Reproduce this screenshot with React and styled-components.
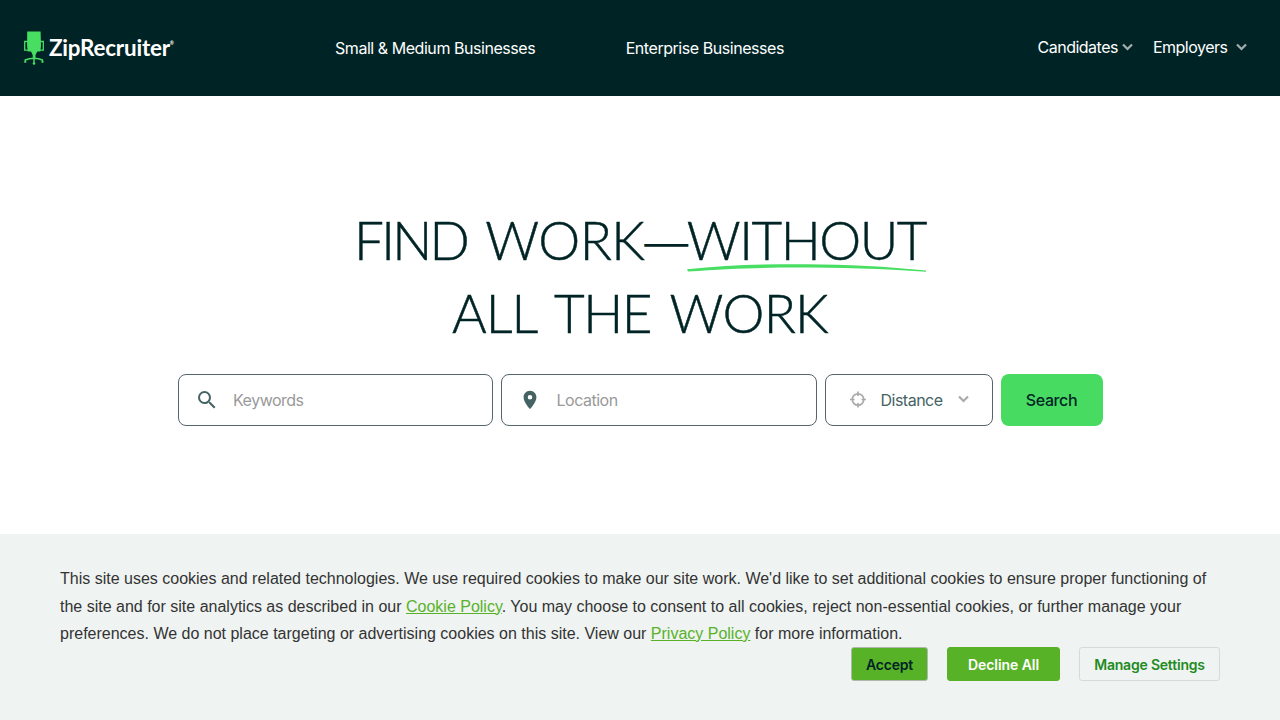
import React from 'react'
import styled, { createGlobalStyle } from 'styled-components'
import { MdSearch, MdLocationOn } from 'react-icons/md'

const GlobalStyle = createGlobalStyle`
* {
  box-sizing: border-box;
}
body {
  margin: 0;
  background: #fff;
  color: #002426;
  font-family: Inter, 'Liberation Sans', sans-serif;
}
`
const Page = styled.div`
  display: flex;
  flex-direction: column;
  height: 100vh;
`
const Header = styled.header`
  display: flex;
  align-items: center;
  height: 96px;
  flex: none;
  padding: 0 33.5px 0 24px;
  background: #002426;
`
const Logo = styled.a`
  display: flex;
  align-items: center;
  width: 311px;
  color: #fff;
  svg {
    margin-right: 5px;
  }
`
const LogoText = styled.span`
  padding-bottom: 1px;
  font-family: Lato, sans-serif;
  font-weight: 700;
  font-size: 22.4px;
  line-height: 30px;
  letter-spacing: -0.2px;
  sup {
    font-size: 5px;
    line-height: 0;
    vertical-align: 11px;
  }
`
const Nav = styled.nav`
  display: flex;
  flex: 1;
  gap: 90.5px;
`
const NavLink = styled.a`
  color: #fff;
  font-size: 16px;
  line-height: 24px;
  letter-spacing: -0.45px;
  white-space: nowrap;
`
const Menus = styled.div`
  display: flex;
  gap: 20px;
  padding-bottom: 2px;
`
const MenuLink = styled(NavLink)`
  display: flex;
  align-items: center;
  gap: ${(p) => p.$gap};
  letter-spacing: -0.5px;
`
const Main = styled.main`
  flex: 1;
  padding-top: 107px;
`
const Title = styled.h1`
  margin: 0;
  text-align: center;
  font-family: Lato, sans-serif;
  font-weight: 300;
  font-size: 53px;
  line-height: 73px;
  letter-spacing: -1.5px;
  word-spacing: 5.5px;
  -webkit-text-stroke: 0.5px #002426;
`
const Word = styled.span`
  letter-spacing: ${(p) => p.$track};
`
const Dash = styled.span`
  font-family: Inter, sans-serif;
  font-size: 44px;
  line-height: 1;
  vertical-align: 1px;
  -webkit-text-stroke: 0;
`
const Marked = styled.span`
  position: relative;
  svg {
    position: absolute;
    left: 0;
    bottom: -1px;
    width: 100%;
    height: 8px;
  }
`
const SearchForm = styled.form`
  display: grid;
  grid-template-columns: 315px 316px 168px 102px;
  gap: 8px;
  justify-content: center;
  margin-top: 25px;
`
const Field = styled.label`
  display: flex;
  align-items: center;
  height: 52px;
  padding: 0 ${(p) => p.$pad};
  border: 1px solid #56646c;
  border-radius: 8px;
  svg {
    flex: none;
    color: #456363;
  }
`
const Input = styled.input`
  flex: 1;
  min-width: 0;
  margin-left: ${(p) => p.$offset};
  padding: 0;
  border: 0;
  outline: none;
  background: none;
  font: 16px Inter, sans-serif;
  letter-spacing: -0.5px;
  &::placeholder {
    color: #999;
    opacity: 1;
  }
`
const Distance = styled.button`
  display: flex;
  align-items: center;
  height: 52px;
  padding: 0 23px 0 24px;
  border: 1px solid #56646c;
  border-radius: 8px;
  background: #fff;
  color: #456363;
  font: 16px Inter, sans-serif;
  letter-spacing: -0.5px;
  svg {
    margin-bottom: 2px;
  }
  span {
    flex: 1;
    margin-left: 14px;
    text-align: left;
  }
`
const SearchButton = styled.button`
  height: 52px;
  border: 0;
  border-radius: 8px;
  background: #47dc61;
  color: #002426;
  font: 500 16px Inter, sans-serif;
  letter-spacing: -0.4px;
`
const CookieBar = styled.section`
  height: 186px;
  flex: none;
  padding: 31px 60px 0;
  background: #eff3f2;
`
const CookieText = styled.p`
  margin: 0;
  color: #333;
  font: 16px/27.5px 'Liberation Sans', sans-serif;
  a {
    color: #58b228;
    text-decoration: underline;
  }
`
const Actions = styled.div`
  display: flex;
  justify-content: flex-end;
  gap: 19px;
  margin-top: -0.5px;
`
const ActionButton = styled.button`
  width: ${(p) => p.$width};
  height: 34px;
  padding: 0;
  border: 1px solid ${(p) => p.$border};
  border-radius: 3px;
  background: ${(p) => p.$bg || 'transparent'};
  color: ${(p) => p.$color};
  font: 600 14px Inter, sans-serif;
  letter-spacing: ${(p) => p.$spacing || '-0.2px'};
`

const Chair = () => (
  <svg width="20" height="34" viewBox="0 0 20 34" fill="none" stroke="#47de62">
    <path d="M3.200 .5h13.400l.4 14.500-.7 5.500h-3l-1.800 3.500v3H8.700v-3L7 20.500H3.800l-.7-5.500z" fill="#47de62" stroke="none" />
    <path d="M4 10.500H.7v8.700H4M16 10.500h3.300v8.700H16" strokeWidth="1.300" />
    <path d="M1.200 31v-2c2.800-1.300 5.800-1.800 8.800-1.800s5.800.5 8.500 1.800v2M10 26v6" strokeWidth="1.400" />
    <circle cx="10" cy="32.500" r="1.300" fill="#47de62" stroke="none" />
    <path d="M.3 31h2M17.500 31h2" strokeWidth="1.600" />
  </svg>
)

const Chevron = ({ color = '#a5adad' }) => (
  <svg width="11" height="8" viewBox="0 0 11 8" fill="none">
    <path d="M1 1.500l4.500 4.500L10 1.500" stroke={color} strokeWidth="2.200" />
  </svg>
)

const Target = () => (
  <svg width="17" height="17" viewBox="0 0 17 17" fill="none">
    <circle cx="8" cy="8.500" r="5.700" stroke="#aaa" strokeWidth="1.700" />
    <path d="M8 .5v4.500M8 12v4.500M0 8.500h4.500M11.500 8.500H16" stroke="#aaa" strokeWidth="1.700" />
  </svg>
)

const App = () => {
  return (
    <>
      <GlobalStyle />
      <Page>
        <Header>
          <Logo>
            <Chair />
            <LogoText>ZipRecruiter<sup>®</sup></LogoText>
          </Logo>
          <Nav>
            <NavLink>Small &amp; Medium Businesses</NavLink>
            <NavLink>Enterprise Businesses</NavLink>
          </Nav>
          <Menus>
            <MenuLink $gap="4px">Candidates <Chevron /></MenuLink>
            <MenuLink $gap="8px">Employers <Chevron /></MenuLink>
          </Menus>
        </Header>
        <Main>
          <Title>
            <Word $track="-2.8px">FIND</Word> <Word $track="-0.6px">WORK</Word><Dash>—</Dash><Marked>WITHOUT
              <svg viewBox="0 0 238 8" preserveAspectRatio="none">
                <path d="M0 5.200C40 1 80 0 119 .2S200 2.500 238 6.500v1.200C195 5 150 3.600 110 3.600S40 4.600 1 7.500z" fill="#47de62" />
              </svg>
            </Marked>
            <br />
            <Word $track="-1px">ALL</Word> THE <Word $track="-0.7px">WORK</Word>
          </Title>
          <SearchForm>
            <Field $pad="16px">
              <MdSearch size={24} />
              <Input $offset="14.5px" placeholder="Keywords" />
            </Field>
            <Field $pad="17px">
              <MdLocationOn size={22} />
              <Input $offset="16px" placeholder="Location" />
            </Field>
            <Distance type="button">
              <Target />
              <span>Distance</span>
              <Chevron color="#aaa" />
            </Distance>
            <SearchButton type="button">Search</SearchButton>
          </SearchForm>
        </Main>
        <CookieBar>
          <CookieText>
            This site uses cookies and related technologies. We use required cookies to make our site work. We'd like to set additional cookies to ensure proper functioning of the site and for site analytics as described in our <a>Cookie Policy</a>. You may choose to consent to all cookies, reject non-essential cookies, or further manage your preferences. We do not place targeting or advertising cookies on this site. View our <a>Privacy Policy</a> for more information.
          </CookieText>
          <Actions>
            <ActionButton $width="77px" $bg="#58b228" $border="#aeb8ae" $color="#002426">Accept</ActionButton>
            <ActionButton $width="113px" $bg="#58b228" $border="#58b228" $color="#fff" $spacing="-0.05px">Decline All</ActionButton>
            <ActionButton $width="141px" $border="#d6dadb" $color="#228b22">Manage Settings</ActionButton>
          </Actions>
        </CookieBar>
      </Page>
    </>
  )
}

export default App
